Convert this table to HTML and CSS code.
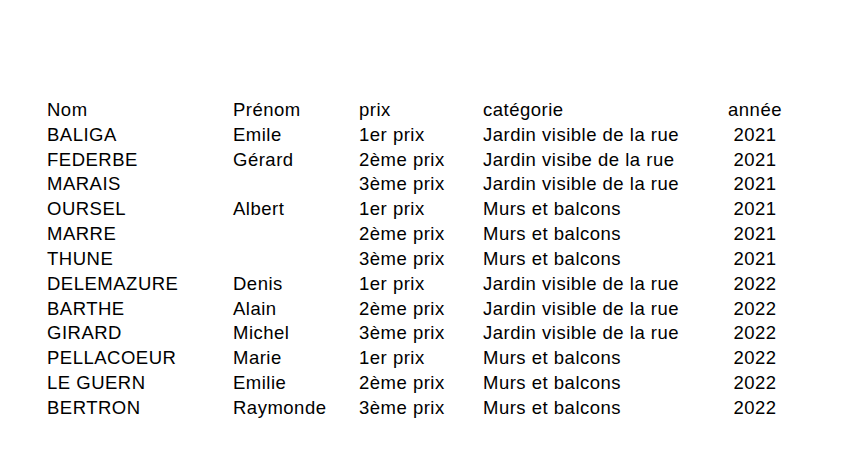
FILE: index.html
```html
<!DOCTYPE html>
<html lang="fr">
<head>
<meta charset="utf-8">
<link rel="stylesheet" href="styles.css">
<title>Palmarès</title>
</head>
<body>
<div class="table">
  <div class="row"><span>Nom</span><span>Prénom</span><span>prix</span><span>catégorie</span><span class="year">année</span></div>
  <div class="row"><span>BALIGA</span><span>Emile</span><span>1er prix</span><span>Jardin visible de la rue</span><span class="year">2021</span></div>
  <div class="row"><span>FEDERBE</span><span>Gérard</span><span>2ème prix</span><span>Jardin visibe de la rue</span><span class="year">2021</span></div>
  <div class="row"><span>MARAIS</span><span></span><span>3ème prix</span><span>Jardin visible de la rue</span><span class="year">2021</span></div>
  <div class="row"><span>OURSEL</span><span>Albert</span><span>1er prix</span><span>Murs et balcons</span><span class="year">2021</span></div>
  <div class="row"><span>MARRE</span><span></span><span>2ème prix</span><span>Murs et balcons</span><span class="year">2021</span></div>
  <div class="row"><span>THUNE</span><span></span><span>3ème prix</span><span>Murs et balcons</span><span class="year">2021</span></div>
  <div class="row"><span>DELEMAZURE</span><span>Denis</span><span>1er prix</span><span>Jardin visible de la rue</span><span class="year">2022</span></div>
  <div class="row"><span>BARTHE</span><span>Alain</span><span>2ème prix</span><span>Jardin visible de la rue</span><span class="year">2022</span></div>
  <div class="row"><span>GIRARD</span><span>Michel</span><span>3ème prix</span><span>Jardin visible de la rue</span><span class="year">2022</span></div>
  <div class="row"><span>PELLACOEUR</span><span>Marie</span><span>1er prix</span><span>Murs et balcons</span><span class="year">2022</span></div>
  <div class="row"><span>LE GUERN</span><span>Emilie</span><span>2ème prix</span><span>Murs et balcons</span><span class="year">2022</span></div>
  <div class="row"><span>BERTRON</span><span>Raymonde</span><span>3ème prix</span><span>Murs et balcons</span><span class="year">2022</span></div>
</div>
</body>
</html>
```
FILE: styles.css
```css
html, body {
  margin: 0;
  padding: 0;
  background: #ffffff;
}
body {
  font-family: "Liberation Sans", Arial, sans-serif;
  font-size: 18.5px;
  color: #000000;
  letter-spacing: 0.5px;
}
.table {
  padding: 98px 0 0 47px;
  display: flex;
  flex-direction: column;
}
.row {
  display: grid;
  grid-template-columns: 186px 126px 124px 232px 80px;
  line-height: 24.83px;
  height: 24.83px;
  white-space: nowrap;
}
.year {
  text-align: center;
}
```
